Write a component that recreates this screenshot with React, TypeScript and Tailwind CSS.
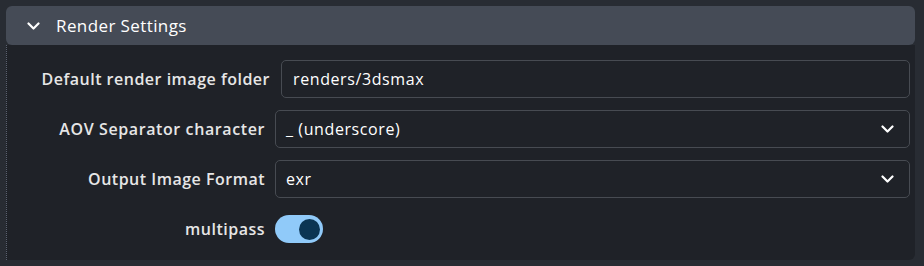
import React from "react";

const Chevron = ({ className }: { className?: string }) => (
  <svg className={className} width="13" height="8" viewBox="0 0 13 8" fill="none" stroke="currentColor" strokeWidth="2.2" strokeLinecap="round" strokeLinejoin="round">
    <path d="M1.5 1.5l5 5 5-5" />
  </svg>
);

export default function App() {
  return (
    <div className="w-[924px] h-[266px] bg-[#282c33] pt-[6px] pl-[6px] pr-[9px] overflow-hidden" style={{ fontFamily: '"Open Sans", "Noto Sans", sans-serif' }}>
      <div className="h-[39px] rounded-[6px] bg-[#454b56] flex items-center pl-[21px] text-white">
        <Chevron className="text-white" />
        <span className="ml-[16px] text-[17px] tracking-[0.4px]">Render Settings</span>
      </div>
      <div className="h-[215px] bg-[#1f2228] border-l border-dotted border-[#5a6170] rounded-br-[6px] pt-[15px] pr-[5px] flex flex-col gap-[12px]">
        <div className="flex items-center h-[38px]">
          <div className="w-[274px] text-right text-[16px] tracking-[0.5px] font-semibold text-[#e6e6e6] pr-[11px] whitespace-nowrap">Default render image folder</div>
          <div className="flex-1 h-[38px] border border-[#474b52] rounded-[5px] flex items-center pl-[11px] text-[16px] tracking-[0.6px] text-white">renders/3dsmax</div>
        </div>
        <div className="flex items-center h-[38px]">
          <div className="w-[268px] text-right text-[16px] tracking-[0.6px] font-semibold text-[#e6e6e6] pr-[10px] whitespace-nowrap">AOV Separator character</div>
          <div className="flex-1 h-[38px] border border-[#474b52] rounded-[5px] flex items-center justify-between pl-[10px] pr-[15px] text-[16px] tracking-[0.6px] text-white">
            <span>_ (underscore)</span>
            <Chevron className="text-white" />
          </div>
        </div>
        <div className="flex items-center h-[38px]">
          <div className="w-[268px] text-right text-[16px] tracking-[0.5px] font-semibold text-[#e6e6e6] pr-[10px] whitespace-nowrap">Output Image Format</div>
          <div className="flex-1 h-[38px] border border-[#474b52] rounded-[5px] flex items-center justify-between pl-[10px] pr-[15px] text-[16px] tracking-[0.6px] text-white">
            <span>exr</span>
            <Chevron className="text-white" />
          </div>
        </div>
        <div className="flex items-center h-[38px]">
          <div className="w-[268px] text-right text-[16px] tracking-[0.5px] font-semibold text-[#e6e6e6] pr-[10px] whitespace-nowrap">multipass</div>
          <div className="w-[48px] h-[28px] rounded-full bg-[#90caf9] flex items-center justify-end pr-[3px]">
            <div className="w-[21px] h-[21px] rounded-full bg-[#0b3553]" />
          </div>
        </div>
      </div>
    </div>
  );
}
